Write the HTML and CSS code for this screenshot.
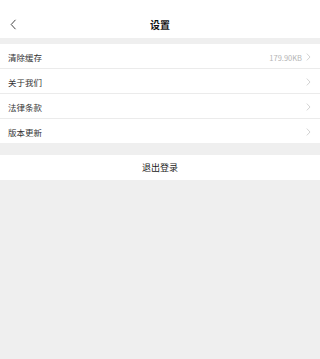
FILE: index.html
```html
<!DOCTYPE html>
<html lang="zh-CN">
<head>
<meta charset="utf-8">
<meta name="viewport" content="width=device-width, initial-scale=1">
<title>设置</title>
<link rel="stylesheet" href="styles.css">
</head>
<body>
<div class="page">
  <header class="header">
    <span class="back">
      <svg width="7" height="11" viewBox="0 0 7 11"><path d="M5.5 0.8 L1.2 5.5 L5.5 10.2" fill="none" stroke="#444" stroke-width="1"/></svg>
    </span>
    <h1 class="title">设置</h1>
  </header>
  <div class="gap-top"></div>
  <ul class="list">
    <li class="row"><span class="label">清除缓存</span><span class="right"><span class="value">179.90KB</span><svg class="chev" width="5" height="8" viewBox="0 0 5 8"><path d="M0.8 0.6 L4 4 L0.8 7.4" fill="none" stroke="#c8c8c8" stroke-width="0.8"/></svg></span></li>
    <li class="row"><span class="label">关于我们</span><span class="right"><svg class="chev" width="5" height="8" viewBox="0 0 5 8"><path d="M0.8 0.6 L4 4 L0.8 7.4" fill="none" stroke="#c8c8c8" stroke-width="0.8"/></svg></span></li>
    <li class="row"><span class="label">法律条款</span><span class="right"><svg class="chev" width="5" height="8" viewBox="0 0 5 8"><path d="M0.8 0.6 L4 4 L0.8 7.4" fill="none" stroke="#c8c8c8" stroke-width="0.8"/></svg></span></li>
    <li class="row"><span class="label">版本更新</span><span class="right"><svg class="chev" width="5" height="8" viewBox="0 0 5 8"><path d="M0.8 0.6 L4 4 L0.8 7.4" fill="none" stroke="#c8c8c8" stroke-width="0.8"/></svg></span></li>
  </ul>
  <div class="gap-mid"></div>
  <div class="logout">退出登录</div>
</div>
</body>
</html>
```
FILE: styles.css
```css
html, body {
  margin: 0;
  padding: 0;
  background: #efefef;
  font-family: "Noto Sans CJK SC", "Noto Sans", sans-serif;
}
.page {
  min-height: 359px;
  background: #efefef;
}
.header {
  height: 28px;
  padding-top: 10px;
  background: #fff;
  display: flex;
  align-items: center;
  justify-content: center;
  position: relative;
}
.back {
  position: absolute;
  left: 10px;
  top: 19px;
  display: flex;
}
.title {
  margin: 0;
  font-size: 10px;
  font-weight: 700;
  color: #111;
  line-height: 12px;
  padding-top: 1px;
}
.gap-top {
  height: 6px;
}
.list {
  list-style: none;
  margin: 0;
  padding: 0;
  background: #fff;
}
.row {
  height: 24px;
  display: flex;
  align-items: center;
  justify-content: space-between;
  padding: 0 9px 0 8px;
  border-bottom: 1px solid #ebebeb;
}
.row:last-child {
  border-bottom: none;
}
.label {
  font-size: 8.5px;
  color: #333;
  padding-top: 2px;
}
.right {
  display: flex;
  align-items: center;
  gap: 4px;
  padding-top: 2px;
}
.value {
  font-size: 7.5px;
  color: #b5b5b5;
}
.chev {
  display: block;
}
.gap-mid {
  height: 12px;
}
.logout {
  height: 25px;
  background: #fff;
  display: flex;
  align-items: center;
  justify-content: center;
  font-size: 9px;
  color: #222;
  line-height: 25px;
}
```
